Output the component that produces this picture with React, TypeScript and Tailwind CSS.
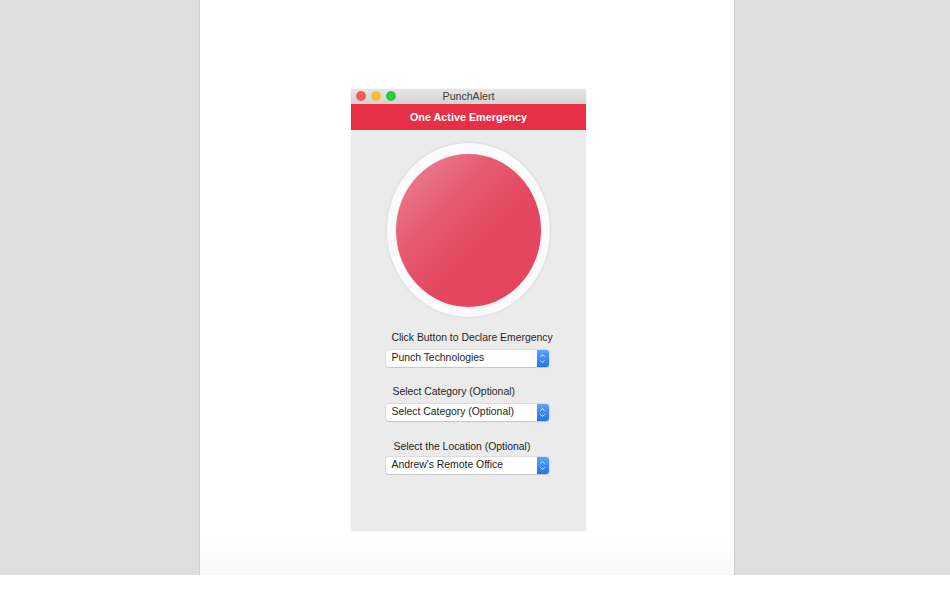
import { ChevronDown, ChevronUp } from "lucide-react"

const font = { fontFamily: '"Liberation Sans", Arial, sans-serif' }

function Picker({ value }: { value: string }) {
  return (
    <div className="flex h-[17px] w-[163px] items-center rounded-[3px] bg-white shadow-[0_0_0_0.5px_rgba(0,0,0,0.12),0_1px_1px_rgba(0,0,0,0.1)]">
      <span className="flex-1 truncate pl-[6px] text-[10.4px] leading-none text-[#1e1e1e]">{value}</span>
      <div className="flex h-full w-[12px] flex-col items-center justify-center rounded-r-[3px] bg-gradient-to-b from-[#5aa4fb] to-[#1f74f3] text-white">
        <ChevronUp size={7} strokeWidth={3} className="-mb-[1px]" />
        <ChevronDown size={7} strokeWidth={3} />
      </div>
    </div>
  )
}

function Field({ label, value, pad, gap, top }: { label: string; value: string; pad: string; gap: string; top: string }) {
  return (
    <div className={`mr-[3px] flex w-[163px] flex-col ${top}`}>
      <span className={`whitespace-nowrap text-[10.4px] leading-[14px] text-[#1e1e1e] ${pad}`}>{label}</span>
      <div className={gap}>
        <Picker value={value} />
      </div>
    </div>
  )
}

export default function App() {
  return (
    <div className="flex h-[594px] w-[950px] flex-col" style={font}>
      <div className="flex h-[575px] bg-[#dedede]">
        <div className="ml-[199px] flex h-full w-[536px] justify-center border-x border-[#cfcfcf] bg-gradient-to-b from-white from-[93%] to-[#f8f8f8]">
          <div className="ml-[3px] mt-[89px] flex h-[442px] w-[235px] flex-col bg-[#ebebeb] shadow-[0_0_0_1px_rgba(0,0,0,0.03)]">
            <div className="relative flex h-[15px] items-center justify-center bg-gradient-to-b from-[#e6e6e6] to-[#d3d3d3]">
              <div className="absolute left-[5px] top-[2px] flex gap-[5px]">
                <div className="h-[10px] w-[10px] rounded-full bg-[#f25d57]" />
                <div className="h-[10px] w-[10px] rounded-full bg-[#f8bc35]" />
                <div className="h-[10px] w-[10px] rounded-full bg-[#2fc840]" />
              </div>
              <span className="text-[10.6px] leading-none text-[#3c3c3c]">PunchAlert</span>
            </div>
            <div className="flex h-[26px] items-center justify-center bg-[#e72f48]">
              <span className="text-[10.8px] font-bold text-white">One Active Emergency</span>
            </div>

            <div className="flex flex-col items-center">
              <div className="mt-[13px] flex h-[174px] w-[163px] items-center justify-center rounded-[50%] bg-[#fbfbfb] shadow-[0_0_3px_rgba(0,0,0,0.12)]">
                <div className="h-[153px] w-[145px] rounded-[50%] bg-[linear-gradient(135deg,#ec8797_0%,#e55a70_35%,#e4475f_60%,#e2455d_100%)] shadow-[0_0_2px_rgba(0,0,0,0.15)]" />
              </div>

              <Field label="Click Button to Declare Emergency" value="Punch Technologies" pad="pl-[6px]" gap="mt-[5px]" top="mt-[14px]" />
              <Field label="Select Category (Optional)" value="Select Category (Optional)" pad="pl-[7px]" gap="mt-[5px]" top="mt-[18px]" />
              <Field label="Select the Location (Optional)" value="Andrew's Remote Office" pad="pl-[8px]" gap="mt-[3px]" top="mt-[19px]" />
            </div>
          </div>
        </div>
      </div>
      <div className="h-[19px] bg-white" />
    </div>
  )
}
